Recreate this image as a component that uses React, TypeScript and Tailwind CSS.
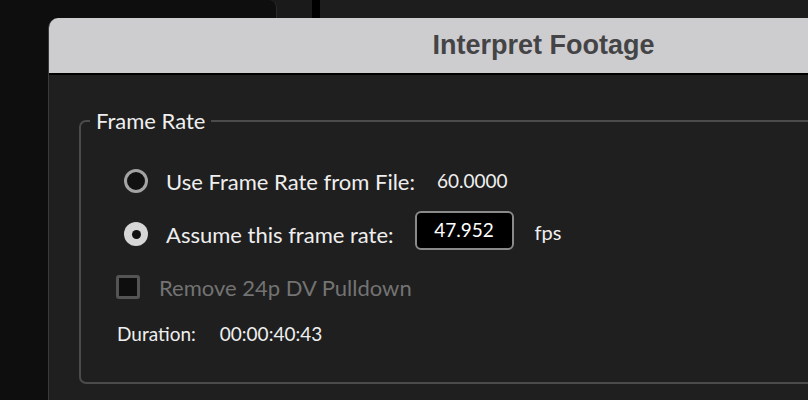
export default function App() {
  const font = { fontFamily: "Lato, 'Open Sans', sans-serif" };
  return (
    <div className="relative h-[400px] w-[808px] overflow-hidden bg-[#1a1a1a]" style={font}>
      {/* background windows */}
      <div className="flex h-full">
        <div className="h-full w-[277px] rounded-tr-[8px] border-r border-[#2a2a2a] bg-[#0e0e0e]" />
        <div className="w-[35px]" />
        <div className="h-full w-[8px] bg-black" />
        <div className="h-full flex-1 bg-[#1d1d1d]" />
      </div>

      {/* dialog */}
      <div className="absolute left-[48px] top-[18px] flex h-[400px] w-[990px] flex-col overflow-hidden rounded-tl-[10px] border-l border-[#3a3a3a] bg-[#1f1f1f]">
        <div className="flex h-[57px] shrink-0 items-center justify-center border-b-2 border-black bg-[#cdcdd0]">
          <span
            className="text-[27px] font-bold text-[#444446]"
            style={{ fontFamily: "'Liberation Sans', Arial, sans-serif" }}
          >
            Interpret Footage
          </span>
        </div>

        <div className="pl-[30px] pt-[34px]">
          <fieldset className="h-[275px] rounded-[7px] border-2 border-[#4b4b4b] pl-[9px]">
            <legend className="px-[6px] text-[22px] leading-[24px] text-[#efefef]">Frame Rate</legend>

            <div className="flex flex-col pl-[34px] pt-[36px] text-[#efefef]">
              <div className="flex h-[24px] items-center">
                <span className="h-[24px] w-[24px] rounded-full border-[3px] border-[#a3a3a3] bg-[#111]" />
                <span className="ml-[18px] text-[22px]">Use Frame Rate from File:</span>
                <span className="ml-[22px] text-[19px]">60.0000</span>
              </div>

              <div className="mt-[21px] flex h-[40px] items-center">
                <span className="flex h-[24px] w-[24px] items-center justify-center rounded-full bg-[#d6d6d6]">
                  <span className="h-[9px] w-[9px] rounded-full bg-[#111]" />
                </span>
                <span className="ml-[18px] text-[22px]">Assume this frame rate:</span>
                <span className="mb-[7px] ml-[21px] flex h-[39px] w-[99px] items-center justify-center rounded-[6px] border-2 border-[#8a8a8a] bg-black text-[19px] text-white">
                  47.952
                </span>
                <span className="mb-[4px] ml-[21px] text-[20px]">fps</span>
              </div>

              <div className="-ml-[8px] mt-[21px] flex h-[24px] items-center">
                <span className="h-[24px] w-[24px] rounded-[3px] border-[3px] border-[#545454] bg-[#0e0e0e]" />
                <span className="ml-[19px] text-[22px] text-[#737373]">Remove 24p DV Pulldown</span>
              </div>

              <div className="-ml-[7px] mt-[21px] flex items-center text-[19px]">
                <span>Duration:</span>
                <span className="ml-[24px]">00:00:40:43</span>
              </div>
            </div>
          </fieldset>
        </div>
      </div>
    </div>
  );
}
